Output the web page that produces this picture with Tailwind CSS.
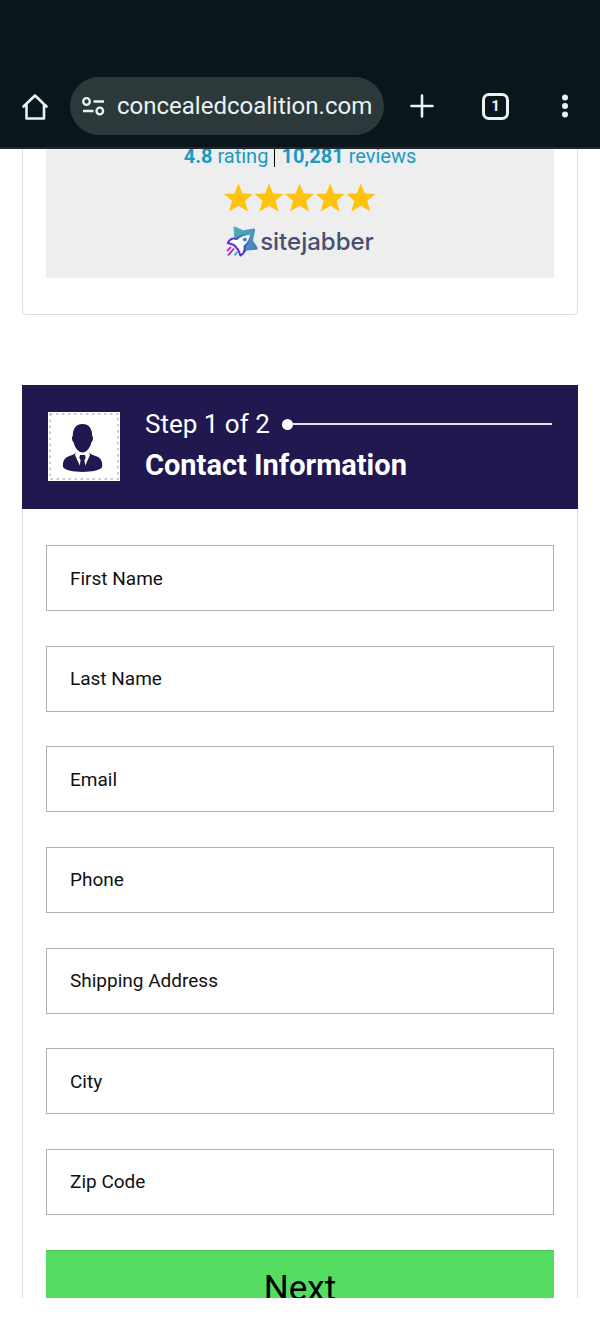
<!DOCTYPE html>
<html lang="en">
<head>
<meta charset="utf-8">
<meta name="viewport" content="width=device-width, initial-scale=1">
<title>Contact Information</title>
<script src="https://cdn.jsdelivr.net/npm/@tailwindcss/browser@4"></script>
</head>
<body class="flex h-screen flex-col bg-white font-['Roboto',sans-serif] text-black">
  <header class="flex shrink-0 items-center border-b-2 border-[#1f292c] bg-[#0a161b] pt-[77px] pb-3 pl-5 pr-5 text-[#e9f3f3]">
    <button type="button" aria-label="Home" class="shrink-0">
      <svg class="h-[30px] w-[30px]" viewBox="0 0 30 30" fill="none" stroke="currentColor" stroke-width="2.600" stroke-linejoin="round" stroke-linecap="round"><path d="M3.500 15.500 15 4.500l11.500 11M6.500 13v14.500h17.500V13"/></svg>
    </button>
    <div class="ml-5 flex h-[58px] min-w-0 flex-1 items-center rounded-full bg-[#2d383a] pl-3 pr-3">
      <button type="button" aria-label="Site settings" class="shrink-0">
        <svg class="h-6 w-6" viewBox="0 0 24 24" fill="none" stroke="currentColor" stroke-width="2.300"><circle cx="4.500" cy="7.500" r="3.300"/><path d="M11.500 7.500h10.500M1 17h10.500"/><circle cx="17.800" cy="17" r="3.300"/></svg>
      </button>
      <input type="text" aria-label="Address" value="concealedcoalition.com/" class="ml-[11px] min-w-0 flex-1 bg-transparent text-2xl outline-none">
    </div>
    <button type="button" aria-label="New tab" class="ml-6 shrink-0">
      <svg class="h-7 w-7" viewBox="0 0 28 28" fill="none" stroke="currentColor" stroke-width="2.600" stroke-linecap="round"><path d="M14 3.500v21M3.500 14h21"/></svg>
    </button>
    <button type="button" aria-label="Tabs" class="ml-[46px] flex h-[27px] w-[27px] shrink-0 items-center justify-center rounded-[7px] border-[3px] border-current text-[15px] font-bold leading-none">1</button>
    <button type="button" aria-label="Menu" class="ml-[43px] shrink-0">
      <svg class="h-7 w-7" viewBox="0 0 28 28" fill="currentColor"><circle cx="13" cy="5.500" r="3"/><circle cx="13" cy="14" r="3"/><circle cx="13" cy="22.500" r="3"/></svg>
    </button>
  </header>

  <main class="mb-[35px] min-h-0 flex-1 overflow-hidden px-[22px]">
    <section class="rounded-b-[5px] border-x border-b border-[#dcdcdc] px-[23px] pb-9">
      <div class="flex flex-col items-center bg-[#eeeeee] pb-5">
        <a href="#reviews" class="-mt-[5px] flex items-center text-xl leading-6 text-[#1b9ac4]">
          <span><b>4.8</b> rating</span>
          <span class="mx-1.5 h-[22px] w-px bg-black"></span>
          <span><b>10,281</b> reviews</span>
        </a>
        <svg class="mt-[15px] h-[31px] w-[152px]" viewBox="0 0 152 31" fill="#ffc20e" role="img" aria-label="5 stars">
          <defs><path id="star" d="M14 .5 18 10.500 28.500 11 20.500 17.800 23.500 28.500 14 22.800 4.500 28.500 7.500 17.800-.5 11 10 10.500Z"/></defs>
          <use href="#star" x=".5"/><use href="#star" x="31"/><use href="#star" x="61.600"/><use href="#star" x="92.200"/><use href="#star" x="122.800"/>
        </svg>
        <div class="mt-3 flex items-center">
          <svg class="h-8 w-8" viewBox="0 0 32 32" aria-hidden="true">
            <defs>
              <linearGradient id="body" x1="0" y1="1" x2="1" y2="0"><stop offset="0" stop-color="#6a20d8"/><stop offset=".55" stop-color="#5540c8"/><stop offset="1" stop-color="#45a8b8"/></linearGradient>
              <linearGradient id="wing" x1="0" y1="0" x2="1" y2="1"><stop offset="0" stop-color="#4db3b5"/><stop offset="1" stop-color="#4779bd"/></linearGradient>
            </defs>
            <path d="M7.500 1.500Q8 0 9.500 .7L17 4.200 27.500 2.500Q29.500 2.500 29 4.500L27 14.500 31.500 21.500Q32 23.500 30.500 23.700L21 24.500 15.500 29.500 12 20 8.500 14Z" fill="url(#wing)"/>
            <path d="M1.800 17C4 12.500 7.500 12 10.500 13 14 10 19 8.200 25 7.500 24.500 13 22.500 17 18.500 20.500 19 25 17.500 28 14.500 29.500L12 23.500 8 19Z" fill="#fff" stroke="url(#body)" stroke-width="2" stroke-linejoin="round"/>
            <circle cx="18.800" cy="13.500" r="2.100" fill="#438bc4"/>
            <path d="M5 21 1 25" stroke="#c434d4" stroke-width="1.900"/>
            <path d="M8 22.500 2 29.500" stroke="#a02ed2" stroke-width="1.900"/>
            <path d="M11.500 25.500 8.500 29.500" stroke="#3eb2c0" stroke-width="1.900"/>
          </svg>
          <span class="ml-0.5 font-['Inter',sans-serif] text-2xl font-medium leading-8 text-[#465072]">sitejabber</span>
        </div>
      </div>
    </section>

    <section class="mt-[70px]">
      <div class="flex items-center bg-[#20184f] px-[26px] pt-5 pb-[22px] text-white">
        <svg class="h-[69px] w-[72px] shrink-0" viewBox="0 0 72 69" aria-hidden="true">
          <path fill="#fff" d="M0 0h72v69H0z"/>
          <path d="M2 2h68v65H2z" fill="none" stroke="#b9b9c4" stroke-width="1.500" stroke-dasharray="2.500 3.500"/>
          <path fill="#20184f" d="M34.500 12C41 12 44.200 16.500 44.200 24c1.300.5 1 5-.7 6-1.500 6-5 10.500-9 10.500S27 36 25.500 30c-1.700-1-2-5.500-.7-6 0-7.500 3.200-12 9.700-12Z"/>
          <path fill="#20184f" d="M28 40.500 34.500 59.500 41 40.500c3 3 6 3 9 4.500 3.500 2 4.500 5 4.200 10C50 61.500 19 61.500 15 55c-.3-5 .7-8 4.200-10 3-1.500 6-1.500 8.800-4.500Z"/>
          <path fill="#fff" d="M28 40 31 42.500h7L41 40l1 3-7.500 16.500L27 43Z"/>
          <path fill="#20184f" d="M32 43h5l.7 3-1.300 2 1.100 7.500-3 4.500-3-4.500 1.100-7.500-1.300-2Z"/>
        </svg>
        <div class="ml-[25px] min-w-0 flex-1">
          <div class="flex items-center">
            <p class="text-[26px] leading-[38px]">Step 1 of 2</p>
            <span class="ml-3 h-[11px] w-[11px] rounded-full bg-white"></span>
            <span class="h-0.5 flex-1 bg-[#e6e3f0]"></span>
          </div>
          <h2 class="text-[29px] font-bold leading-[44px]">Contact Information</h2>
        </div>
      </div>
      <form class="border-x border-[#dcdcdc] px-[23px] pt-9 pb-9">
        <div class="flex min-h-[670px] flex-col justify-between">
          <input type="text" aria-label="First Name" placeholder="First Name" class="h-[66px] w-full border border-[#b0b0b0] px-[23px] text-[19px] placeholder:text-[#111111]">
          <input type="text" aria-label="Last Name" placeholder="Last Name" class="h-[66px] w-full border border-[#b0b0b0] px-[23px] text-[19px] placeholder:text-[#111111]">
          <input type="email" aria-label="Email" placeholder="Email" class="h-[66px] w-full border border-[#b0b0b0] px-[23px] text-[19px] placeholder:text-[#111111]">
          <input type="tel" aria-label="Phone" placeholder="Phone" class="h-[66px] w-full border border-[#b0b0b0] px-[23px] text-[19px] placeholder:text-[#111111]">
          <input type="text" aria-label="Shipping Address" placeholder="Shipping Address" class="h-[66px] w-full border border-[#b0b0b0] px-[23px] text-[19px] placeholder:text-[#111111]">
          <input type="text" aria-label="City" placeholder="City" class="h-[66px] w-full border border-[#b0b0b0] px-[23px] text-[19px] placeholder:text-[#111111]">
          <input type="text" aria-label="Zip Code" placeholder="Zip Code" class="h-[66px] w-full border border-[#b0b0b0] px-[23px] text-[19px] placeholder:text-[#111111]">
        </div>
        <button type="button" class="mt-[35px] h-[78px] w-full border-t border-[#48c455] bg-[#55dd62] text-[35px]">Next</button>
      </form>
    </section>
  </main>
</body>
</html>
